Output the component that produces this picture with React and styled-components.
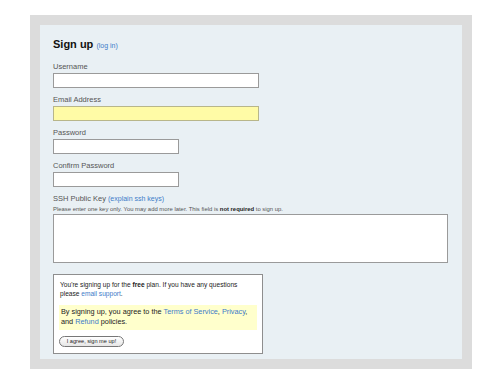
import React from 'react';
import styled, { createGlobalStyle } from 'styled-components';

const Global = createGlobalStyle`
    body {
        margin: 0;
        background: #fff;
        font-family: "Liberation Sans", Arial, sans-serif;
    }
`

const Frame = styled.div`
    margin: 15px 0 0 30px;
    width: 442px;
    padding: 10px;
    box-sizing: border-box;
    background: #dcdcdc;
`

const Panel = styled.div`
    background: #e9f0f4;
    padding: 11px 13px 5px;
`

const Title = styled.h1`
    margin: 0 0 10px;
    height: 16px;
    font-size: 11px;
    line-height: 16px;
    font-weight: bold;
    color: #111;
    a {
        font-size: 7px;
        line-height: 1;
        font-weight: normal;
    }
`

const Link = styled.a`
    color: #3d7cc9;
    text-decoration: none;
`

const Field = styled.div`
    margin-bottom: 7px;
`

const Label = styled.label`
    display: block;
    height: 10px;
    font-size: 7.5px;
    line-height: 10px;
    color: #555;
    margin-bottom: 1px;
    a {
        font-size: 7px;
        line-height: 1;
    }
`

const Hint = styled.div`
    height: 9px;
    font-size: 5.9px;
    line-height: 9px;
    color: #555;
    b {
        color: #222;
    }
`

const Input = styled.input`
    display: block;
    box-sizing: border-box;
    width: ${p => p.$w}px;
    height: 15px;
    margin: 0;
    padding: 0 2px;
    border: 1px solid ${p => (p.$filled ? '#b8b68a' : '#9a9a9a')};
    background: ${p => (p.$filled ? '#fffba6' : '#fff')};
    outline: none;
`

const Area = styled.textarea`
    display: block;
    box-sizing: border-box;
    width: 395px;
    height: 49px;
    margin: 0;
    border: 1px solid #9a9a9a;
    background: #fff;
    resize: none;
    outline: none;
`

const Box = styled.div`
    margin-top: 11px;
    width: 210px;
    box-sizing: border-box;
    background: #fff;
    border: 1px solid #8e8e8e;
    padding: 5px 5px 6px;
`

const Note = styled.p`
    margin: 0 0 7px;
    font-size: 6.6px;
    line-height: 9px;
    color: #222;
    padding-left: 1px;
`

const Agree = styled.p`
    margin: 0 0 6px;
    padding: 2px 2px 3px;
    background: #ffffcc;
    font-size: 7.3px;
    line-height: 10px;
    color: #222;
`

const Button = styled.button`
    display: block;
    height: 11px;
    width: 65px;
    padding: 0;
    border: 1px solid #777;
    border-radius: 6px;
    background: linear-gradient(#fff, #e6e6e6);
    font-family: "Liberation Sans", Arial, sans-serif;
    font-size: 5.6px;
    line-height: 9px;
    color: #222;
`

export default function App() {
    return (
        <>
            <Global />
            <Frame>
                <Panel>
                    <Title>Sign up <Link href="#">(log in)</Link></Title>
                    <Field>
                        <Label>Username</Label>
                        <Input $w={206} />
                    </Field>
                    <Field>
                        <Label>Email Address</Label>
                        <Input $w={206} $filled />
                    </Field>
                    <Field>
                        <Label>Password</Label>
                        <Input $w={126} type="password" />
                    </Field>
                    <Field>
                        <Label>Confirm Password</Label>
                        <Input $w={126} type="password" />
                    </Field>
                    <div>
                        <Label>SSH Public Key <Link href="#">(explain ssh keys)</Link></Label>
                        <Hint>Please enter one key only. You may add more later. This field is <b>not required</b> to sign up.</Hint>
                        <Area />
                    </div>
                    <Box>
                        <Note>
                            You're signing up for the <b>free</b> plan. If you have any questions please <Link href="#">email support</Link>.
                        </Note>
                        <Agree>
                            By signing up, you agree to the <Link href="#">Terms of Service</Link>, <Link href="#">Privacy</Link>, and <Link href="#">Refund</Link> policies.
                        </Agree>
                        <Button>I agree, sign me up!</Button>
                    </Box>
                </Panel>
            </Frame>
        </>
    )
}
